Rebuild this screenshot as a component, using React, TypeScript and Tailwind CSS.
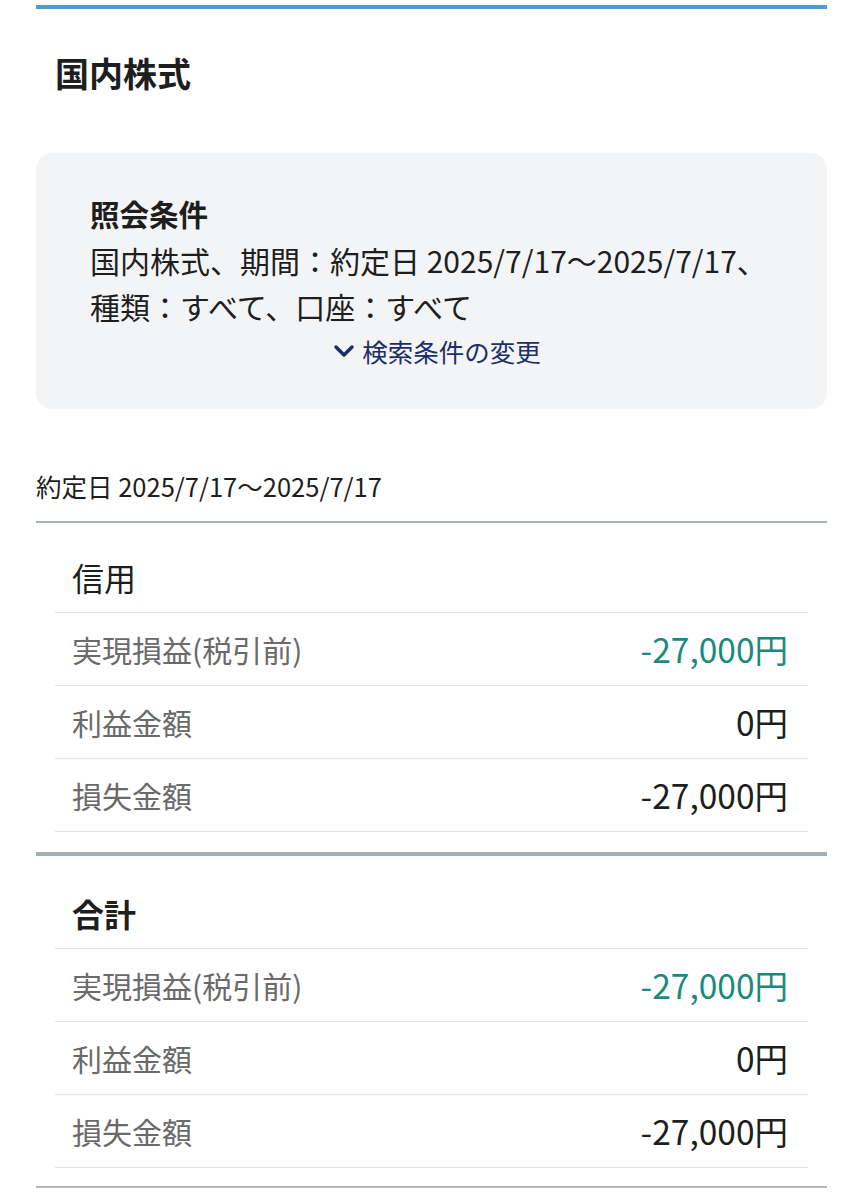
import { ChevronDown } from "lucide-react";

type Row = { label: string; value: string; tone?: "green" };

const ROWS: Row[] = [
  { label: "実現損益(税引前)", value: "-27,000円", tone: "green" },
  { label: "利益金額", value: "0円" },
  { label: "損失金額", value: "-27,000円" },
];

function Section({ title, bold }: { title: string; bold?: boolean }) {
  return (
    <div className="px-[19px]">
      <div
        className={`border-b border-[#e3e3e3] pl-[17px] pb-[15px] text-[32px] leading-[40px] text-[#1e1e1e] ${
          bold ? "font-bold" : "font-normal"
        }`}
      >
        {title}
      </div>
      {ROWS.map((r) => (
        <div
          key={r.label}
          className="flex items-center justify-between border-b border-[#e3e3e3] pl-[17px] pr-[20px] pt-[16px] pb-[16px] leading-[40px]"
        >
          <span className="text-[30px] text-[#6a6a6a]">{r.label}</span>
          <span
            className={`text-[33.5px] ${r.tone === "green" ? "text-[#1b8a7b]" : "text-[#1e1e1e]"}`}
          >
            {r.value}
          </span>
        </div>
      ))}
    </div>
  );
}

export default function App() {
  return (
    <div
      className="h-[1199px] overflow-hidden bg-white px-[36px] pt-[5px]"
      style={{ fontFamily: '"Noto Sans CJK JP", "Noto Sans", sans-serif' }}
    >
      <div className="h-[4px] bg-[#4f9bcb]" />

      <h1 className="mt-[44px] pl-[19px] text-[34px] font-bold leading-[40px] text-[#1e1e1e]">
        国内株式
      </h1>

      <div className="mt-[60px] rounded-[16px] bg-[#f3f4f6] pl-[54px] pr-[48px] pt-[42px] pb-[37px] text-[#1e1e1e]">
        <div className="text-[29.5px] font-bold leading-[36px]">照会条件</div>
        <p className="mt-[6px] text-[30px] leading-[46px]">
          国内株式、期間：約定日 2025/7/17〜2025/7/17、
          <br />
          種類：すべて、口座：すべて
        </p>
        <div className="mt-[1px] flex items-center justify-center gap-[2px] text-[25.5px] leading-[42px] text-[#1c2f66]">
          <ChevronDown size={32} strokeWidth={2.6} className="-my-[4px]" />
          <span>検索条件の変更</span>
        </div>
      </div>

      <div className="mt-[61px] text-[25.5px] leading-[32px] text-[#1e1e1e]">
        約定日 2025/7/17〜2025/7/17
      </div>

      <div className="mt-[19px] h-[2px] bg-[#a9b3b8]" />

      <div className="pt-[34px]">
        <Section title="信用" />
      </div>

      <div className="mt-[20px] h-[4px] bg-[#a7adb7]" />

      <div className="pt-[37px]">
        <Section title="合計" bold />
      </div>

      <div className="mt-[18px] h-[2px] bg-[#b3b8bb]" />

      <div className="mt-[6px] pl-[12px] text-[25px] leading-[32px] text-[#1e1e1e]">
        株式 信用
      </div>
    </div>
  );
}
